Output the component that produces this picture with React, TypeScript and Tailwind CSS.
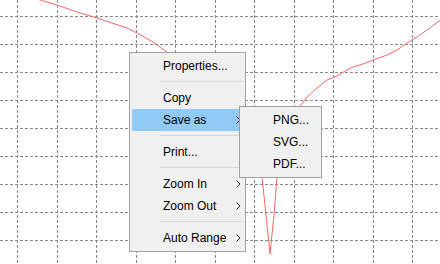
import { ReactNode } from 'react';

const vLines = Array.from({ length: 11 }, (_, i) => Math.round(17 + 39.5 * i) + 0.5);
const hLines = Array.from({ length: 9 }, (_, i) => 16 + 28 * i + 0.5);

const curve =
  '36,-2 40,0 57,5 80,13 97,18 127,28 137,33 153,42 167,52 200,85 235,125 255,150 262,177 266,215 270,254 ' +
  '274,215 277,177 285,140 300,106 307,97 317,88 327,80 337,76 345,71 353,67 363,64 373,60 387,55 397,50 407,43 417,37 427,30 442,19';

function Chevron() {
  return (
    <svg width="5" height="8" viewBox="0 0 5 8" className="absolute right-[2px] top-[7px]">
      <polyline points="0.5,0.5 4,4 0.5,7.5" fill="none" stroke="#333" strokeWidth="1" />
    </svg>
  );
}

function Item({ label, active, sub }: { label: string; active?: boolean; sub?: boolean }) {
  return (
    <div
      className={`relative h-[22px] pl-[31px] leading-[22px] text-black ${active ? 'bg-[#91c9f7]' : ''}`}
    >
      {label}
      {sub && <Chevron />}
    </div>
  );
}

function Separator() {
  return (
    <div className="h-[10px] pl-[28px] pt-[4px]">
      <div className="h-px bg-[#d7d7d7]" />
    </div>
  );
}

function Menu({ className, children }: { className: string; children: ReactNode }) {
  return (
    <div
      className={`absolute flex flex-col border border-[#a0a0a0] bg-[#f0f0f0] px-[2px] py-[2px] text-[12px] ${className}`}
    >
      {children}
    </div>
  );
}

export default function App() {
  return (
    <div
      className="relative h-[264px] w-[440px] overflow-hidden bg-white"
      style={{ fontFamily: '"Liberation Sans", Arial, sans-serif' }}
    >
      {/* plot */}
      <svg width="440" height="264" className="block">
        {vLines.map((x) => (
          <line key={`v${x}`} x1={x} y1={0} x2={x} y2={264} stroke="#888" strokeDasharray="3 2" />
        ))}
        {hLines.map((y) => (
          <line key={`h${y}`} x1={0} y1={y} x2={440} y2={y} stroke="#888" strokeDasharray="3 2" />
        ))}
        <polyline points={curve} fill="none" stroke="#ff6666" strokeWidth="1" />
      </svg>

      {/* context menu */}
      <Menu className="left-[129px] top-[52px] w-[117px]">
        <Item label="Properties..." />
        <Separator />
        <Item label="Copy" />
        <Item label="Save as" active sub />
        <Separator />
        <Item label="Print..." />
        <Separator />
        <Item label="Zoom In" sub />
        <Item label="Zoom Out" sub />
        <Separator />
        <Item label="Auto Range" sub />
      </Menu>

      {/* save as submenu */}
      <Menu className="left-[239px] top-[106px] w-[83px]">
        <Item label="PNG..." />
        <Item label="SVG..." />
        <Item label="PDF..." />
      </Menu>
    </div>
  );
}
